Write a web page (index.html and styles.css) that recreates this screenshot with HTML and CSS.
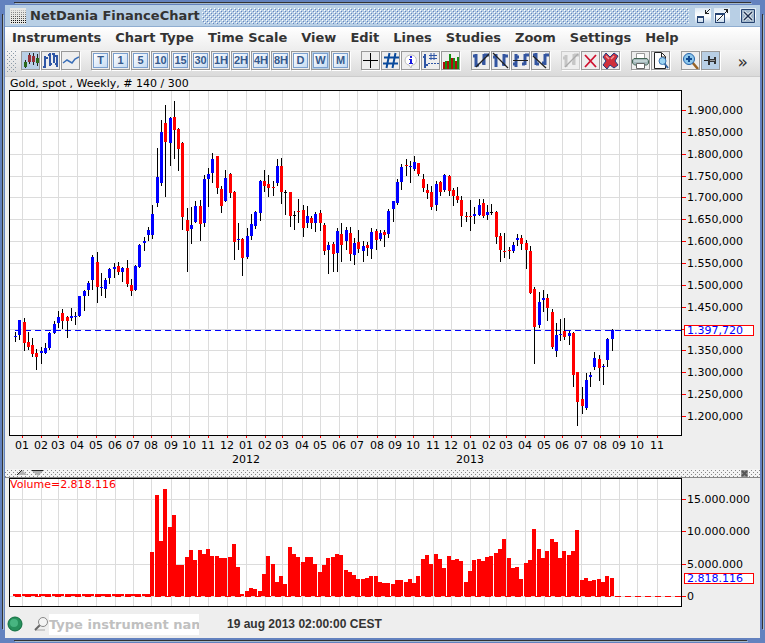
FILE: index.html
```html
<!DOCTYPE html>
<html lang="en">
<head>
    <meta charset="UTF-8">
    <meta name="viewport" content="width=device-width, initial-scale=1.0">
    <title>NetDania FinanceChart</title>
    <link rel="stylesheet" href="styles.css">
</head>
<body>
    <div class="window">
        <header class="titlebar">
            <svg class="app-icon" width="16" height="16" viewBox="0 0 16 16" shape-rendering="crispEdges">
                <rect width="16" height="16" fill="#e8e8e4"/>
                <path d="M1 2.500h15" stroke="#bbb" stroke-dasharray="1 1"/>
                <path d="M1 4.500h15M1 6.500h15" stroke="#888" stroke-dasharray="1 1"/>
                <path d="M1 8.500h15M1 10.500h15" stroke="#555" stroke-dasharray="1 1"/>
                <path d="M1 12.500h15M1 14.500h15" stroke="#111" stroke-dasharray="1 1"/>
            </svg>
            <h1>NetDania FinanceChart</h1>
            <div class="bumps"></div>
            <div class="window-buttons">
                <button aria-label="Minimize">
                    <svg width="16" height="16" viewBox="0 0 16 16" shape-rendering="crispEdges"><path d="M2.500 8.500h6v6h-6zM2 9.500h7" fill="none" stroke="#274472"/><path d="M10.500 2v4M10 5.500h4M12.500 3v1M13.500 2v1M14.500 1v1M11.500 4v2" fill="none" stroke="#222"/></svg>
                </button>
                <button aria-label="Maximize">
                    <svg width="16" height="16" viewBox="0 0 16 16" shape-rendering="crispEdges"><path d="M1.500 5.500h9v9h-9zM1 6.500h10" fill="none" stroke="#274472"/><path d="M10 1.500h4M13.500 1v4M12.500 2v2M11.500 4v1M5.500 10v1M6.500 9v1M7.500 8v1M8.500 7v1M4.500 11v1M3.500 12v1" fill="none" stroke="#222"/></svg>
                </button>
                <button class="close" aria-label="Close">
                    <svg width="16" height="16" viewBox="0 0 16 16"><path d="M1.500 1.500h13v13h-13z" fill="#a3b8cc" stroke="#274472"/><path d="M4 4l8 8M12 4l-8 8" stroke="#fff" stroke-width="3"/><path d="M4 4l8 8M12 4l-8 8" stroke="#1d3050" stroke-width="1.500"/></svg>
                </button>
            </div>
        </header>

        <nav class="menubar">
            <button>Instruments</button>
            <button>Chart Type</button>
            <button>Time Scale</button>
            <button>View</button>
            <button>Edit</button>
            <button>Lines</button>
            <button>Studies</button>
            <button>Zoom</button>
            <button>Settings</button>
            <button>Help</button>
        </nav>

        <div class="toolbar">
            <div class="grip"></div>
            <!-- Chart type -->
            <div class="group">
                <button class="active" aria-label="Candlesticks"><svg viewBox="0 0 17 17"><path d="M3.500 8v8M7.500 1v11M11.500 1v12M15.500 2v12" stroke="#222"/><path d="M2 10h3v5h-3zM14 6h3v5h-3z" fill="#2c6a1c"/><path d="M6 3h3v7h-3zM10 4h3v6h-3z" fill="#973138"/></svg></button>
                <button aria-label="Bars"><svg viewBox="0 0 17 17"><path d="M3 4v12M1 15h2M3 6h3M8 1v13M6 3h2M8 12h2M12 1v10M10 2h2M12 4h3M15 3v12M13 12h2" fill="none" stroke="#2f56a5" stroke-width="2"/></svg></button>
                <button aria-label="Line"><svg viewBox="0 0 17 17"><path d="M1 11l4-3 5 3 3-4 4-2" fill="none" stroke="#3b6fb8" stroke-width="1.500"/></svg></button>
            </div>
            <!-- Time scale -->
            <div class="group">
                <button><span class="key">T</span></button>
                <button><span class="key">1</span></button>
                <button><span class="key">5</span></button>
                <button><span class="key">10</span></button>
                <button><span class="key">15</span></button>
                <button><span class="key">30</span></button>
                <button><span class="key">1H</span></button>
                <button><span class="key">2H</span></button>
                <button><span class="key">4H</span></button>
                <button><span class="key">8H</span></button>
                <button><span class="key">D</span></button>
                <button class="active"><span class="key">W</span></button>
                <button><span class="key">M</span></button>
            </div>
            <!-- View -->
            <div class="group">
                <button aria-label="Crosshair"><svg viewBox="0 0 17 17"><path d="M1 8.500h15M8.500 1v15" stroke="#000"/></svg></button>
                <button aria-label="Grid"><svg viewBox="0 0 17 17"><path d="M7.500 1l-3 15M13.500 1l-3 15M2 5.500h15M1 11.500h15" stroke="#0a4a9c" stroke-width="2"/></svg></button>
                <button aria-label="Info"><svg viewBox="0 0 17 17"><path d="M9 3c7 0 7 10 1 10l-1 3-2-3c-6-1-5-10 2-10z" fill="#fff" stroke="#bbb"/><path d="M8 4h2v2h-2zM7 7h3v4h1v1h-4v-1h1v-3h-1z" fill="#1a1ae0"/></svg></button>
                <button aria-label="Values"><svg viewBox="0 0 17 17"><path d="M3 2v14M1 5h2M3 13h3" stroke="#2f56a5" stroke-width="2"/><path d="M6 11.500h11" stroke="#2f56a5" stroke-dasharray="2 1"/><path d="M9 1v7M12 1v7M7 3.500h8M7 6.500h8" stroke="#2f56a5"/></svg></button>
                <button aria-label="Volume"><svg viewBox="0 0 17 17" shape-rendering="crispEdges"><path d="M1 10h2v7h-2zM5 9h2v8h-2zM9 6h2v11h-2zM13 9h2v8h-2z" fill="#b00d0d"/><path d="M3 9h2v8h-2zM7 2h2v15h-2zM11 6h2v11h-2zM15 5h2v12h-2z" fill="#149014"/></svg></button>
            </div>
            <!-- Lines -->
            <div class="group">
                <button aria-label="Trend line"><svg viewBox="0 0 17 17"><path d="M4 2v13M1 4h3M4 13h3M12 2v11M10 11h3M12 3h5" stroke="#3355a0" stroke-width="3"/><path d="M4 15l13-13" stroke="#222" stroke-width="1.300"/></svg></button>
                <button aria-label="Ray"><svg viewBox="0 0 17 17"><path d="M4 2v13M1 5h3M12 2v12M10 12h3M12 4h4" stroke="#3355a0" stroke-width="3"/><path d="M1 1l15 15" stroke="#222" stroke-width="1.300"/></svg></button>
                <button aria-label="Horizontal line"><svg viewBox="0 0 17 17"><path d="M4 2v13M1 12h3M4 5h3M13 2v11M10 12h3M13 3h4" stroke="#3355a0" stroke-width="3"/><path d="M1 8.500h15" stroke="#222"/></svg></button>
                <button aria-label="Channel"><svg viewBox="0 0 17 17"><path d="M4 1v12M1 3h3M4 12h3M13 2v11M10 11h3M13 3h4" stroke="#3355a0" stroke-width="3"/><path d="M1 4l13 12" stroke="#222" stroke-width="1.300"/></svg></button>
            </div>
            <!-- Edit -->
            <div class="group">
                <button aria-label="Edit line" disabled><svg viewBox="0 0 17 17"><path d="M4 3v12M1 6h3M12 2v11M10 11h3M12 3h5" stroke="#c6c6c6" stroke-width="3"/><path d="M3 15l13-13" stroke="#aaa" stroke-width="1.300"/></svg></button>
                <button aria-label="Delete"><svg viewBox="0 0 17 17"><path d="M3 3l11 12M14 3l-11 12" stroke="#cf1230" stroke-width="1.800"/></svg></button>
                <button aria-label="Delete all"><svg viewBox="0 0 17 17"><path d="M4 1l4 4 4-4 4 3-3 5 3 4-4 3-4-3-3 4-4-4 3-4-3-4z" fill="#cf303c" stroke="#243b80"/><path d="M4 4l3 3M12 4l-3 3" stroke="#f49a9a" stroke-width="1.500"/></svg></button>
            </div>
            <!-- Print -->
            <div class="group">
                <button aria-label="Print"><svg viewBox="0 0 17 17"><path d="M4.500 1.500h8v6h-8z" fill="#fff" stroke="#999"/><path d="M2 6.500h13l1.500 2v3l-2 1.500h-12l-2-2v-3z" fill="#a4b8bb" stroke="#465"/><path d="M2 9h13" stroke="#e0eded"/><path d="M4.500 11.500h8v5h-8z" fill="#fff" stroke="#666"/></svg></button>
                <button aria-label="Print preview"><svg viewBox="0 0 17 17"><path d="M2.500.500h7l4 4v12h-11z" fill="#fff" stroke="#222"/><path d="M9.500 1v4h4" fill="none" stroke="#222"/><path d="M12 11l4 5" stroke="#3464a0" stroke-width="2"/><circle cx="10.500" cy="9" r="3.500" fill="#9cd4f2" stroke="#3a76b4"/></svg></button>
            </div>
            <!-- Zoom -->
            <div class="group">
                <button aria-label="Zoom in"><svg viewBox="0 0 17 17"><path d="M10 10l6 7" stroke="#986326" stroke-width="2.500"/><circle cx="7" cy="7" r="5.500" fill="#8bc6ec" stroke="#2463aa"/><path d="M7 4v6M4 7h6" stroke="#124a90" stroke-width="2"/></svg></button>
                <button class="active" aria-label="Pin"><svg viewBox="0 0 17 17"><path d="M2 8.500h5" stroke="#222"/><path d="M6 4h2v3h4v-2h2v7h-2v-2h-4v3h-2z" fill="#333"/><path d="M8 8.500h5" stroke="#999"/></svg></button>
            </div>
            <button class="more" aria-label="More tools">»</button>
        </div>

        <main>
            <p class="info">Gold, spot , Weekly, # 140 / 300</p>
            <svg id="priceChart" class="price-chart" role="img" aria-label="Gold weekly price"></svg>
            <div class="splitter">
                <svg width="28" height="6" viewBox="0 0 28 6"><path d="M1 5l5-5 5 5z" fill="#b0b0b0"/><path d="M1 5l5-5" stroke="#222"/><path d="M16 1h11l-5 5z" fill="#b0b0b0"/><path d="M16 .500h11" stroke="#222"/></svg>
                <button aria-label="Close volume"><svg width="7" height="7" viewBox="0 0 7 7"><path d="M0 0h7v7h-7z" fill="#999"/><path d="M1 1l5 5M6 1l-5 5" stroke="#555" stroke-width="2"/></svg></button>
            </div>
            <svg id="volumeChart" class="volume-chart" role="img" aria-label="Volume"></svg>
        </main>

        <footer>
            <svg class="status" width="16" height="16" viewBox="0 0 16 16"><circle cx="8" cy="8" r="7" fill="#27905c" stroke="#0d6e3e"/><circle cx="7" cy="7" r="4" fill="#48b581"/></svg>
            <label for="search" aria-label="Instrument">
                <svg width="15" height="16" viewBox="0 0 15 16"><path d="M1 14h10" stroke="#ccc" stroke-width="2"/><path d="M6 9l-5 5" stroke="#666" stroke-width="2"/><circle cx="9" cy="6" r="4.500" fill="#f4f4f4" stroke="#888"/></svg>
            </label>
            <input type="text" id="search" placeholder="Type instrument name">
            <time>19 aug 2013 02:00:00 CEST</time>
        </footer>
    </div>

    <script src="chart.js"></script>
</body>
</html>
```
FILE: styles.css
```css
/* Global styles */
* {
    box-sizing: border-box;
}

body {
    margin: 0;
    font-family: "DejaVu Sans", Verdana, sans-serif;
    font-size: 13px;
    color: #333;
    background-color: #6382bf;
}

button {
    margin: 0;
    padding: 0;
    border: none;
    background: none;
    font: inherit;
    color: inherit;
}

svg {
    display: block;
}

/* Window frame, the lines stop short of the corners */
.window {
    display: flex;
    flex-direction: column;
    min-height: 100vh;
    padding: 5px;
    background:
        linear-gradient(#333, #333) 14px 2px / calc(100% - 28px) 1px no-repeat,
        linear-gradient(#a3b8cc, #a3b8cc) 15px 3px / calc(100% - 28px) 1px no-repeat,
        linear-gradient(#333, #333) 14px calc(100% - 2px) / calc(100% - 32px) 1px no-repeat,
        linear-gradient(#a3b8cc, #a3b8cc) 15px calc(100% - 1px) / calc(100% - 32px) 1px no-repeat,
        linear-gradient(#333, #333) 2px 14px / 1px calc(100% - 28px) no-repeat,
        linear-gradient(#a3b8cc, #a3b8cc) 3px 15px / 1px calc(100% - 28px) no-repeat,
        linear-gradient(#333, #333) calc(100% - 2px) 14px / 1px calc(100% - 28px) no-repeat,
        linear-gradient(#a3b8cc, #a3b8cc) calc(100% - 1px) 15px / 1px calc(100% - 28px) no-repeat,
        #6382bf;
}

/* Title bar */
.titlebar {
    display: flex;
    align-items: center;
    height: 22px;
    padding: 0 4px 0 5px;
    background-color: #b8cfe5;
    border-bottom: 1px solid #8fadd0;
}

.titlebar h1 {
    margin: 0 2px 0 4px;
    font-size: 13px;
    white-space: nowrap;
}

.bumps {
    flex: 1;
    height: 16px;
    background:
        conic-gradient(at 1px 1px, transparent 75%, #fff 0) 0 0 / 4px 4px,
        conic-gradient(at 1px 1px, transparent 75%, #fff 0) 2px 2px / 4px 4px,
        conic-gradient(at 1px 1px, transparent 75%, #6382bf 0) 1px 1px / 4px 4px,
        conic-gradient(at 1px 1px, transparent 75%, #6382bf 0) 3px 3px / 4px 4px;
}

.window-buttons {
    display: flex;
    gap: 3px;
    margin-left: 6px;
}

.window-buttons button {
    background: linear-gradient(#dce8f3, #fff 50%, #b8cfe5);
}

.window-buttons .close {
    margin-left: 7px;
}

/* Menu bar */
.menubar {
    display: flex;
    gap: 14px;
    height: 23px;
    padding: 0 7px 2px;
    background: linear-gradient(#fff, #ededed);
}

.menubar button {
    font-weight: bold;
    white-space: nowrap;
}

/* Toolbar */
.toolbar {
    display: flex;
    align-items: flex-start;
    gap: 10px;
    height: 27px;
    padding: 1px 12px 0 2px;
    background: linear-gradient(#f4f4f4, #dadada);
    border-bottom: 1px solid #ccc;
}

.grip {
    width: 10px;
    height: 22px;
    margin-right: -6px;
    background:
        conic-gradient(at 1px 1px, transparent 75%, #8b9aa8 0) 0 0 / 4px 4px,
        conic-gradient(at 1px 1px, transparent 75%, #8b9aa8 0) 2px 2px / 4px 4px;
}

.group {
    display: flex;
    gap: 1px;
    padding-right: 1px;
}

.group button {
    width: 19px;
    height: 19px;
    border: 1px solid #999;
    background-color: #eee;
    box-shadow: 1px 1px 0 #fff;
}

.group svg {
    width: 17px;
    height: 17px;
    fill: none;
}

.group .active {
    background-color: #b8cfe5;
}

.group button:disabled {
    border-color: #ccc;
}

.key {
    display: block;
    width: 15px;
    height: 15px;
    margin: 1px;
    border: 1px solid #7ba0cf;
    background: linear-gradient(135deg, #fff, #c5daf2);
    color: #365a8d;
    font: bold 11px/13px "Liberation Sans", Arial, sans-serif;
    text-align: center;
}

.more {
    height: 22px;
    margin-left: auto;
    font-size: 17px;
    line-height: 22px;
}

/* Charts */
main {
    flex: 1;
    background-color: #eee;
}

.info {
    margin: 0;
    padding-left: 5px;
    height: 13px;
    color: #000;
    font-size: 11px;
    line-height: 13px;
}

.price-chart,
.volume-chart {
    width: 100%;
    font-size: 11px;
    shape-rendering: crispEdges;
}

.price-chart {
    height: 379px;
}

.volume-chart {
    height: 130px;
}

.plot {
    fill: #fff;
    stroke: #000;
}

.grid {
    stroke: #dcdcdc;
}

.tick {
    stroke: #f00;
}

.wick {
    fill: #000;
}

.up {
    fill: #00f;
}

.down {
    fill: #f00;
}

.same {
    fill: #000;
}

.last-line {
    stroke: #00f;
    stroke-dasharray: 6 4;
}

.zero-line {
    stroke: #f00;
    stroke-dasharray: 6 4;
}

.last-box {
    fill: #fff;
    stroke: #f00;
}

.last-text {
    fill: #00f;
}

.volume-text {
    fill: #f00;
}

.splitter {
    display: flex;
    justify-content: space-between;
    align-items: center;
    height: 9px;
    padding: 0 12px 0 11px;
    border-bottom: 1px solid #888;
    background:
        conic-gradient(at 1px 1px, transparent 75%, #888 0) 2px 1px / 4px 4px,
        conic-gradient(at 1px 1px, transparent 75%, #888 0) 4px 3px / 4px 4px,
        #f4f4f4;
}

/* Status bar */
footer {
    display: flex;
    align-items: center;
    height: 30px;
    padding: 2px 2px 0;
    background-color: #eee;
}

footer label {
    margin: 0 0 0 11px;
}

footer input {
    width: 150px;
    height: 21px;
    padding: 0;
    border: none;
    background-color: #fff;
    color: #333;
    font: bold 13px "DejaVu Sans", Verdana, sans-serif;
}

footer input::placeholder {
    color: #c0c0c0;
    opacity: 1;
}

footer time {
    margin-left: 28px;
    font: bold 12px "Liberation Sans", Arial, sans-serif;
}
```
FILE: chart.js
```javascript
// One row per week: x, high, body top, body bottom, low, direction, volume height
var weeks = `
15 242 246 247 252 u 2
19 230 230 245 250 u 2
24 228 232 253 261 d 2
28 242 252 257 260 d 2
32 248 255 264 267 d 2
36 259 263 267 280 d 2
41 257 261 263 274 u 2
45 253 258 263 264 u 2
49 242 243 258 260 u 2
54 231 234 243 244 u 2
58 221 227 233 238 u 2
62 219 223 231 239 d 2
67 226 227 231 248 d 2
71 218 226 228 231 u 2
75 222 226 227 235 u 2
79 206 206 226 227 u 2
84 200 201 206 221 u 2
88 191 193 200 206 u 2
92 165 167 190 200 u 2
97 162 172 197 213 d 2
101 183 197 198 206 u 2
105 188 190 199 208 u 2
109 178 179 188 194 u 2
114 173 177 179 188 u 2
118 172 176 182 185 d 2
122 177 178 182 192 u 2
127 170 178 194 197 d 2
131 189 195 201 206 d 2
135 175 176 200 201 u 2
139 154 155 177 178 u 2
144 147 151 153 161 u 2
148 137 140 145 151 u 2
152 115 124 145 149 u 44
157 58 87 113 117 u 101
161 30 42 93 96 u 55
165 15 33 52 107 d 107
170 27 28 53 76 u 69
174 11 27 40 69 d 81
178 38 39 59 81 d 31
182 52 53 127 140 d 31
187 118 130 141 182 d 39
191 117 135 139 154 u 46
195 111 116 132 133 u 36
200 110 116 134 151 d 46
204 85 89 133 137 u 42
208 78 84 89 117 u 47
212 63 69 83 93 u 40
217 66 66 98 104 d 40
221 96 99 116 123 d 38
225 80 88 111 112 u 38
230 83 84 103 108 d 39
234 101 102 152 170 d 52
238 133 149 150 160 u 29
242 148 149 168 186 d 2
247 138 146 167 169 u 5
251 124 134 146 150 u 8
255 121 122 136 139 u 7
260 90 91 123 131 u 5
264 80 91 96 102 d 22
268 85 94 98 107 d 40
273 91 97 98 106 d 32
277 69 76 93 96 u 14
281 68 76 102 114 d 20
285 100 102 103 125 s 12
290 102 102 126 137 d 49
294 121 125 126 140 s 42
298 109 121 122 133 d 39
303 115 120 138 147 d 34
307 116 126 133 138 u 39
311 126 128 133 139 d 39
315 122 124 133 142 u 32
320 120 123 133 141 d 24
324 133 135 161 165 d 31
328 152 155 160 184 u 38
333 152 154 164 182 d 39
337 138 141 163 182 u 42
341 133 144 155 172 d 41
346 137 140 151 160 u 26
350 137 143 164 171 d 24
354 148 153 165 175 u 21
358 140 152 159 163 d 17
363 151 156 161 172 u 17
367 152 155 158 166 d 18
371 138 142 159 169 u 20
376 139 141 150 160 d 20
380 140 143 149 151 u 14
384 140 142 145 157 d 13
388 119 121 144 148 u 13
393 111 111 119 132 u 12
397 89 92 113 115 u 16
401 74 77 92 100 u 16
406 69 75 76 86 d 14
410 71 76 77 93 u 17
414 66 72 79 81 u 13
418 73 73 84 86 d 20
423 84 89 98 102 d 37
427 94 100 103 109 d 41
431 96 102 117 120 d 32
436 91 94 115 121 u 42
440 91 92 102 106 d 37
444 84 85 100 102 u 28
449 85 86 101 106 d 40
453 98 100 106 116 d 36
457 97 106 110 113 d 37
461 106 110 126 137 d 35
466 122 126 127 132 d 14
470 110 126 127 141 d 25
474 117 124 126 134 u 36
479 109 115 125 126 u 37
483 109 113 126 128 d 35
487 115 122 125 130 u 39
491 114 122 123 125 s 40
496 121 122 147 154 d 43
500 143 146 160 172 d 47
504 143 161 162 168 d 57
509 157 160 161 169 d 38
513 152 155 161 163 u 28
517 144 148 150 156 u 29
521 145 148 154 160 d 17
526 150 153 160 179 d 33
530 156 161 203 204 d 36
534 197 199 237 274 d 67
539 202 212 235 238 u 47
543 200 208 210 222 u 38
547 204 208 218 231 d 45
552 219 222 257 259 d 57
556 233 245 261 267 u 54
560 229 244 245 251 u 38
564 228 241 247 250 d 45
569 241 243 246 255 u 41
573 242 243 285 297 d 45
577 282 282 312 336 d 66
582 297 309 316 324 d 16
586 283 290 318 320 u 18
590 282 285 287 297 u 15
594 262 268 277 280 u 16
599 265 269 278 291 d 17
603 274 276 277 295 u 14
607 248 249 270 277 u 20
612 239 240 249 261 u 18
`.trim().split("\n").map(function(row) {
    return row.split(" ");
});

var months = [22, 41, 58, 77, 96, 115, 133, 151, 171, 189, 208, 227, 246, 265, 282, 302, 320, 339, 357, 377, 395, 413, 433, 451, 470, 489, 506, 525, 544, 562, 581, 600, 619, 637, 657];
var classes = { u: "up", d: "down", s: "same" };

var plotStart = 9;   // x of the plot's left edge in the data
var plotUnits = 672;
var left = 4;        // space left of the plot
var axisWidth = 79;  // space right of the plot

function rect(x, y, w, h, cls) {
    return `<rect x="${x}" y="${y}" width="${w}" height="${h}" class="${cls}"/>`;
}

function box(x, y, w, h, cls) {
    return rect(x + 0.5, y + 0.5, w, h, cls);
}

function hline(x1, x2, y, cls) {
    return `<path d="M${x1} ${y + 0.5}H${x2}" class="${cls}"/>`;
}

function vline(x, y1, y2, cls) {
    return `<path d="M${x + 0.5} ${y1}V${y2}" class="${cls}"/>`;
}

function text(x, y, value, cls, anchor) {
    return `<text x="${x}" y="${y}" class="${cls}" text-anchor="${anchor || "start"}">${value}</text>`;
}

function draw() {
    var price = document.getElementById("priceChart");
    var volume = document.getElementById("volumeChart");
    var plotWidth = price.clientWidth - left - axisWidth;
    var right = left + plotWidth;

    function px(x) {
        return left + Math.round((x - plotStart) * plotWidth / plotUnits);
    }

    // Price
    var out = box(left, 0, plotWidth, 345, "plot");
    months.forEach(function(x, i) {
        var label = String(i % 12 + 1).padStart(2, "0");
        out += vline(px(x), 1, 345, "grid");
        out += vline(px(x), 346, 348, "tick");
        out += text(px(x), 359, label, "label", "middle");
        if (i > 0 && i % 12 === 0) {
            out += text(px(x), 373, 2011 + i / 12, "label", "middle");
        }
    });
    for (var p = 1900; p >= 1200; p -= 50) {
        var y = Math.round(20 + (1900 - p) * 306 / 700);
        out += hline(left + 1, right, y, "grid");
        out += hline(right + 1, right + 5, y, "tick");
        if (p !== 1400) {
            out += text(right + 6, y + 4, "1." + (p - 1000) + ",000", "label");
        }
    }
    out += hline(px(15), right, 240, "last-line");
    weeks.forEach(function(w) {
        var x = px(w[0]);
        out += rect(x, w[1], 1, w[4] - w[1], "wick");
        out += rect(x - 1, w[2], 3, w[3] - w[2], classes[w[5]]);
    });
    out += box(right + 3, 235, 69, 10, "last-box");
    out += text(right + 6, 244, "1.397,720", "last-text");
    price.innerHTML = out;

    // Volume
    out = box(left, 0, plotWidth, 128, "plot");
    months.forEach(function(x) {
        out += vline(px(x), 1, 128, "grid");
    });
    [[21, "15.000.000"], [53, "10.000.000"], [86, "5.000.000"], [118, "0"]].forEach(function(row) {
        out += hline(left + 1, right, row[0], "grid");
        out += hline(right + 1, right + 5, row[0], "tick");
        out += text(right + 6, row[0] + 4, row[1], "label");
    });
    weeks.forEach(function(w) {
        out += rect(px(w[0]) - 2, 118 - w[6], 4, w[6], "down");
    });
    out += hline(px(15), right, 118, "zero-line");
    out += box(right + 3, 95, 69, 10, "last-box");
    out += text(right + 6, 104, "2.818.116", "last-text");
    out += text(left + 1, 10, "Volume=2.818.116", "volume-text");
    volume.innerHTML = out;
}

window.addEventListener("resize", draw);
draw();
```
